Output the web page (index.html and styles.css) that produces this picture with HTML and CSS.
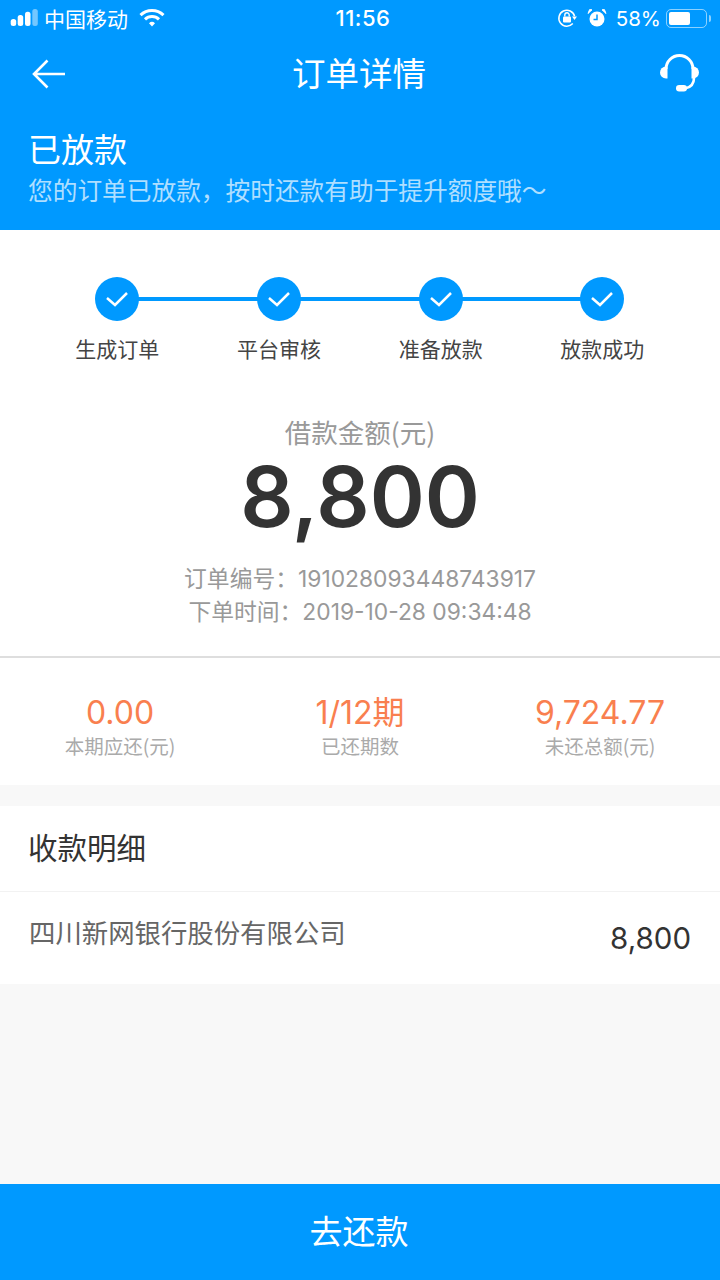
FILE: index.html
```html
<!DOCTYPE html>
<html lang="zh">
<head>
<meta charset="utf-8">
<title>订单详情</title>
<link rel="stylesheet" href="styles.css">
</head>
<body>
<div class="page">
  <header class="hero">
    <div class="status">
      <div class="status-side">
        <svg class="signal" width="28" height="18" viewBox="0 0 28 18"><rect x="0.7" y="10" width="5.500" height="7" rx="2.500" fill="#fff"/><rect x="7.700" y="6" width="5.500" height="11" rx="2.500" fill="#fff"/><rect x="15" y="2.700" width="5.500" height="14.300" rx="2.500" fill="#fff"/><rect x="22.300" y="0" width="5.500" height="17" rx="2.500" fill="#fff" opacity=".45"/></svg>
        <span class="carrier">中国移动</span>
        <svg class="wifi" width="26" height="20" viewBox="0 0 26 20"><path d="M1.500 7.200a16.500 16.500 0 0 1 23 0" fill="none" stroke="#fff" stroke-width="3"/><path d="M6 11.400a10 10 0 0 1 14 0" fill="none" stroke="#fff" stroke-width="3"/><path d="M10 15.200a4.400 4.400 0 0 1 6 0L13 18.400z" fill="#fff"/></svg>
      </div>
      <span class="clock">11:56</span>
      <div class="status-side right">
        <svg width="20" height="20" viewBox="0 0 20 20"><path d="M17.600 8.200A8 8 0 1 0 15.800 15.600" fill="none" stroke="#fff" stroke-width="1.500"/><path d="M15 8.500h5L17.500 12z" fill="#fff"/><rect x="6" y="8.500" width="8" height="6" rx="1" fill="#fff"/><path d="M7.800 8.500V7a2.200 2.200 0 0 1 4.400 0v1.500" fill="none" stroke="#fff" stroke-width="1.400"/></svg>
        <svg class="alarm" width="20" height="20" viewBox="0 0 20 20"><circle cx="10" cy="11" r="7.500" fill="#fff"/><path d="M10 6.500V11.500H6.500" fill="none" stroke="#0099ff" stroke-width="1.500"/><path d="M1 5.500 5 1.800 2.600 1.600z M19 5.500 15 1.800 17.400 1.600z" fill="#fff" stroke="#fff"/></svg>
        <span class="percent">58%</span>
        <span class="battery"><span class="battery-fill"></span></span>
        <span class="battery-cap"></span>
      </div>
    </div>
    <div class="nav">
      <svg class="back" width="36" height="32" viewBox="0 0 36 32"><path d="M35 16H4M17.500 2.500 4 16l13.500 13.500" fill="none" stroke="#fff" stroke-width="2.600"/></svg>
      <h1 class="nav-title">订单详情</h1>
      <svg class="service" width="42" height="42" viewBox="0 0 42 42"><path d="M7 16a13.500 13.500 0 0 1 27 0" fill="none" stroke="#fff" stroke-width="3"/><path d="M7 13.500a6 6 0 0 0 0 12h1.500v-12z" fill="#fff"/><path d="M34 13.500a6 6 0 0 1 0 12h-1.500v-12z" fill="#fff"/><path d="M35 25c0 6-3.500 9.500-9 10.500" fill="none" stroke="#fff" stroke-width="2.600"/><rect x="17" y="32" width="11" height="6.500" rx="3.200" fill="#fff"/></svg>
    </div>
    <div class="state">
      <div class="state-title">已放款</div>
      <div class="state-sub">您的订单已放款，按时还款有助于提升额度哦～</div>
    </div>
  </header>

  <section class="order">
    <div class="steps">
      <div class="step"><span class="dot"><svg width="24" height="18" viewBox="0 0 24 18"><path d="M2 8l8 7L22 3" fill="none" stroke="#fff" stroke-width="2.500"/></svg></span><span class="step-label">生成订单</span></div>
      <div class="step"><span class="dot"><svg width="24" height="18" viewBox="0 0 24 18"><path d="M2 8l8 7L22 3" fill="none" stroke="#fff" stroke-width="2.500"/></svg></span><span class="step-label">平台审核</span></div>
      <div class="step"><span class="dot"><svg width="24" height="18" viewBox="0 0 24 18"><path d="M2 8l8 7L22 3" fill="none" stroke="#fff" stroke-width="2.500"/></svg></span><span class="step-label">准备放款</span></div>
      <div class="step"><span class="dot"><svg width="24" height="18" viewBox="0 0 24 18"><path d="M2 8l8 7L22 3" fill="none" stroke="#fff" stroke-width="2.500"/></svg></span><span class="step-label">放款成功</span></div>
    </div>
    <div class="amount-label">借款金额(元)</div>
    <div class="amount">8,800</div>
    <div class="meta"><span class="meta-key">订单编号：</span><span class="meta-val">191028093448743917</span></div>
    <div class="meta second"><span class="meta-key">下单时间：</span><span class="meta-val">2019-10-28 09:34:48</span></div>
  </section>

  <section class="stats">
    <div class="stat"><div class="stat-num">0.00</div><div class="stat-label">本期应还(元)</div></div>
    <div class="stat"><div class="stat-num">1/12期</div><div class="stat-label">已还期数</div></div>
    <div class="stat"><div class="stat-num">9,724.77</div><div class="stat-label">未还总额(元)</div></div>
  </section>

  <section class="detail">
    <div class="detail-head">收款明细</div>
    <div class="detail-row"><span class="bank">四川新网银行股份有限公司</span><span class="bank-amount">8,800</span></div>
  </section>

  <div class="spacer"></div>
  <button class="pay">去还款</button>
</div>
</body>
</html>
```
FILE: styles.css
```css
* { box-sizing: border-box; margin: 0; padding: 0; }
html, body { width: 720px; height: 1280px; overflow: hidden; }
body { font-family: "Noto Sans CJK SC", Inter, "Noto Sans", sans-serif; background: #f8f8f8; color: #333; }
.page { width: 720px; height: 1280px; display: flex; flex-direction: column; }
.hero { height: 230px; background: #0099ff; color: #fff; display: flex; flex-direction: column; flex: none; }
.status { height: 36px; padding: 0 9px 0 10px; display: flex; align-items: center; justify-content: space-between; font-family: Inter, "Noto Sans CJK SC", sans-serif; }
.status-side { display: flex; align-items: center; width: 250px; }
.status-side.right { justify-content: flex-end; width: 245px; }
.signal { margin-right: 6px; }
.carrier { font-family: "Noto Sans CJK SC", sans-serif; font-size: 21px; line-height: 36px; }
.wifi { margin-left: 11px; }
.clock { font-size: 22px; font-weight: 500; letter-spacing: .5px; }
.alarm { margin-left: 10px; }
.percent { font-size: 20.500px; margin-left: 9px; }
.battery { width: 41px; height: 19px; border: 1.500px solid rgba(255,255,255,.55); border-radius: 5px; padding: 2px; margin-left: 5px; display: flex; }
.battery-fill { width: 21px; background: #fff; border-radius: 2px; }
.battery-cap { width: 2px; height: 7px; background: rgba(255,255,255,.55); margin-left: 2px; border-radius: 0 2px 2px 0; }
.nav { height: 75px; padding: 0 19px; display: grid; grid-template-columns: 1fr auto 1fr; align-items: center; }
.back { margin-left: 11px; }
.service { justify-self: end; }
.nav-title { font-size: 33.500px; font-weight: 400; line-height: 1; margin: 0 2px 4px 0; }
.state { padding: 17px 28px 0; }
.state-title { font-size: 33px; line-height: 40px; }
.state-sub { font-size: 24.700px; line-height: 36px; color: rgba(255,255,255,.7); margin-top: 3px; white-space: nowrap; }
.order { background: #fff; height: 428px; flex: none; border-bottom: 2px solid #dedede; text-align: center; }
.steps { display: grid; grid-template-columns: repeat(4, 161.670px); padding: 47px 0 0 36.500px; }
.step { display: flex; flex-direction: column; align-items: center; position: relative; }
.step:not(:last-child)::after { content: ""; position: absolute; left: 50%; width: 100%; top: 20px; height: 4px; background: #0099ff; }
.dot { width: 44px; height: 44px; border-radius: 50%; background: #0099ff; display: flex; align-items: center; justify-content: center; position: relative; z-index: 1; }
.step-label { font-size: 21px; line-height: 30px; margin-top: 12px; color: #444; }
.amount-label { font-size: 26.500px; line-height: 36px; color: #999; margin-top: 51px; }
.amount { font-family: Inter, sans-serif; font-size: 83.500px; font-weight: 600; line-height: 80px; color: #333; margin-top: 7px; }
.meta { font-size: 22.800px; line-height: 32px; color: #999; margin-top: 25px; }
.meta.second { margin-top: 0; }
.meta-val { font-family: Inter, sans-serif; }
.stats { background: #fff; height: 127px; flex: none; display: grid; grid-template-columns: repeat(3, 1fr); padding-top: 34px; text-align: center; }
.stat-num { font-family: Inter, "Noto Sans CJK SC", sans-serif; font-size: 32px; line-height: 42px; color: #f97f4f; }
.stat-label { font-size: 19.500px; line-height: 30px; color: #aaa; margin-top: -3px; }
.detail { background: #fff; margin-top: 21px; height: 178px; flex: none; }
.detail-head { height: 86px; padding-left: 28px; font-size: 29.500px; line-height: 80px; color: #333; border-bottom: 1px solid #f2f2f2; }
.detail-row { display: flex; justify-content: space-between; padding: 0 29px; height: 92px; }
.bank { font-size: 26.400px; line-height: 80px; color: #666; }
.bank-amount { font-family: Inter, sans-serif; font-size: 29.500px; line-height: 92px; color: #333; }
.spacer { flex: 1; }
.pay { height: 96px; flex: none; border: 0; padding: 0 2px 4px 0; background: #0099ff; color: #fff; font-family: "Noto Sans CJK SC", sans-serif; font-size: 33px; }
```
